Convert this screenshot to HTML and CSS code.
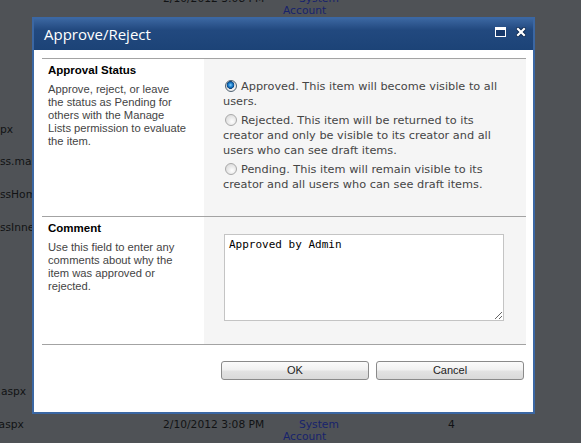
FILE: index.html
```html
<!DOCTYPE html>
<html>
<head>
<meta charset="utf-8">
<title>Approve/Reject</title>
<link rel="stylesheet" href="styles.css">
</head>
<body>
<div class="list">
  <div class="row"><span class="name"></span><span class="date">2/10/2012 3:08 PM</span><span class="user"><i class="presence"></i>System Account</span><span class="count"></span></div>
  <div class="row"><span class="name"></span><span class="date">2/10/2012 3:08 PM</span><span class="user"><i class="presence"></i>System Account</span><span class="count"></span></div>
  <div class="row"><span class="name"></span><span class="date">2/10/2012 3:08 PM</span><span class="user"><i class="presence"></i>System Account</span><span class="count"></span></div>
  <div class="row"><span class="name"></span><span class="date">2/10/2012 3:08 PM</span><span class="user"><i class="presence"></i>System Account</span><span class="count"></span></div>
  <div class="row"><span class="name">Page.aspx</span><span class="date">2/10/2012 3:08 PM</span><span class="user"><i class="presence"></i>System Account</span><span class="count"></span></div>
  <div class="row"><span class="name">BlueGlass.master</span><span class="date">2/10/2012 3:08 PM</span><span class="user"><i class="presence"></i>System Account</span><span class="count"></span></div>
  <div class="row"><span class="name">BlueGlassHome.aspx</span><span class="date">2/10/2012 3:08 PM</span><span class="user"><i class="presence"></i>System Account</span><span class="count"></span></div>
  <div class="row"><span class="name">BlueGlassInner.aspx</span><span class="date">2/10/2012 3:08 PM</span><span class="user"><i class="presence"></i>System Account</span><span class="count"></span></div>
  <div class="row"><span class="name"></span><span class="date">2/10/2012 3:08 PM</span><span class="user"><i class="presence"></i>System Account</span><span class="count"></span></div>
  <div class="row"><span class="name"></span><span class="date">2/10/2012 3:08 PM</span><span class="user"><i class="presence"></i>System Account</span><span class="count"></span></div>
  <div class="row"><span class="name"></span><span class="date">2/10/2012 3:08 PM</span><span class="user"><i class="presence"></i>System Account</span><span class="count"></span></div>
  <div class="row"><span class="name"></span><span class="date">2/10/2012 3:08 PM</span><span class="user"><i class="presence"></i>System Account</span><span class="count"></span></div>
  <div class="row"><span class="name">Default.aspx</span><span class="date">2/10/2012 3:08 PM</span><span class="user"><i class="presence"></i>System Account</span><span class="count"></span></div>
  <div class="row"><span class="name">Search.aspx</span><span class="date">2/10/2012 3:08 PM</span><span class="user"><i class="presence"></i>System Account</span><span class="count">4</span></div>
</div>

<div class="dialog">
  <div class="titlebar">
    <span class="title">Approve/Reject</span>
    <span class="tools">
      <svg class="icon-max" width="11" height="10" viewBox="0 0 11 10">
        <rect x="0.5" y="0.5" width="10" height="9" fill="#17386a" stroke="#ffffff" stroke-width="1"/>
        <rect x="1" y="1" width="9" height="2" fill="#ffffff"/>
      </svg>
      <svg class="icon-close" width="10" height="10" viewBox="0 0 10 10">
        <path d="M2 2 L8 8 M8 2 L2 8" stroke="#0e2a52" stroke-width="4" stroke-linecap="square"/>
        <path d="M2 2 L8 8 M8 2 L2 8" stroke="#ffffff" stroke-width="2.2" stroke-linecap="square"/>
      </svg>
    </span>
  </div>
  <div class="content">
    <div class="section">
      <div class="label">
        <h3>Approval Status</h3>
        <p>Approve, reject, or leave the status as Pending for others with the Manage Lists permission to evaluate the item.</p>
      </div>
      <div class="field options">
        <label class="option"><input class="radio" type="radio" name="status" checked>Approved. This item will become visible to all users.</label>
        <label class="option"><input class="radio" type="radio" name="status">Rejected. This item will be returned to its creator and only be visible to its creator and all users who can see draft items.</label>
        <label class="option"><input class="radio" type="radio" name="status">Pending. This item will remain visible to its creator and all users who can see draft items.</label>
      </div>
    </div>
    <div class="section">
      <div class="label">
        <h3>Comment</h3>
        <p>Use this field to enter any comments about why the item was approved or rejected.</p>
      </div>
      <div class="field comment">
        <textarea class="comment-box">Approved by Admin</textarea>
      </div>
    </div>
    <div class="buttons">
      <button class="btn" type="button">OK</button>
      <button class="btn" type="button">Cancel</button>
    </div>
  </div>
</div>
</body>
</html>
```

FILE: styles.css
```css
* { box-sizing: border-box; }

html, body {
  margin: 0;
  padding: 0;
  height: 100%;
  overflow: hidden;
}

body {
  background: #4f5256;
  font-family: "DejaVu Sans", Verdana, sans-serif;
}

/* background list (behind the modal overlay) */
.list {
  padding-top: 1px;
  margin: -8.5px 0 0 -41.5px;
  font-size: 10.7px;
  line-height: 12.5px;
  color: #111214;
}

.row {
  display: grid;
  grid-template-columns: 204.5px 120px 165px 40px;
  height: 32.8px;
  white-space: nowrap;
}

.user {
  white-space: normal;
  width: 70px;
  color: #17226c;
}

.presence {
  display: inline-block;
  width: 16px;
}

/* dialog */
.dialog {
  position: absolute;
  left: 32px;
  top: 17px;
  width: 503px;
  border: 2px solid #3b67a3;
  background: #ffffff;
  font-family: "Liberation Sans", Arial, sans-serif;
}

.titlebar {
  height: 31px;
  display: flex;
  justify-content: space-between;
  align-items: flex-start;
  padding: 0 7px 0 10px;
  background: linear-gradient(#3a659f 0, #22497f 35%, #1c4377 100%);
}

.title {
  font-family: "Open Sans", "Liberation Sans", sans-serif;
  font-size: 15px;
  line-height: 20px;
  color: #ffffff;
  padding-top: 5px;
}

.tools {
  display: flex;
  gap: 10px;
  margin-top: 8px;
}

.tools svg { display: block; }

.content {
  padding: 8px 7px 32px 8px;
}

.section {
  display: grid;
  grid-template-columns: 162px 1fr;
  border-top: 1px solid #a3a3a3;
}

.label {
  padding: 4px 17px 0 6px;
}

.label h3 {
  margin: 0;
  font-size: 11.5px;
  line-height: 14px;
  font-weight: bold;
  color: #000000;
}

.label p {
  margin: 6px 0 0;
  font-size: 11.2px;
  line-height: 13px;
  color: #444444;
}

.field {
  background: #f5f5f5;
}

.options {
  padding: 20px 14px 24px 19px;
}

.option {
  display: block;
  font-family: "DejaVu Sans", Verdana, sans-serif;
  font-size: 11.3px;
  line-height: 15px;
  color: #454545;
  margin-bottom: 4px;
}

.option:last-child { margin-bottom: 0; }

.radio {
  -webkit-appearance: none;
  appearance: none;
  display: inline-block;
  width: 12px;
  height: 12px;
  margin: 0 4px 0 2px;
  vertical-align: -2px;
  border-radius: 50%;
  border: 1px solid #a9a9a9;
  background: radial-gradient(circle at 60% 65%, #ffffff 0, #eeeeee 35%, #d4d4d4 100%);
}

.radio:checked {
  border-color: #4f6272;
  background:
    radial-gradient(circle at 45% 40%, #8fd3ff 0, #2c8fd8 1.6px, #0c5ea8 3px, #0b3f77 3.6px, rgba(0,0,0,0) 4.1px),
    radial-gradient(circle at 60% 65%, #ffffff 0, #e8e8e8 40%, #c9c9c9 100%);
}

.comment {
  padding: 17px 22px 23px 20px;
}

.comment-box {
  display: block;
  width: 280px;
  height: 87px;
  margin: 0;
  padding: 3px 4px;
  border: 1px solid #c4c4c4;
  background: #ffffff;
  font-family: "DejaVu Sans Mono", "Liberation Mono", monospace;
  font-size: 11px;
  line-height: 13px;
  color: #000000;
  resize: both;
}

.buttons {
  border-top: 1px solid #a3a3a3;
  padding: 16px 2px 0 0;
  display: flex;
  justify-content: flex-end;
  gap: 7px;
}

.btn {
  width: 148px;
  height: 19px;
  padding: 0;
  border: 1px solid #8a8a8a;
  border-radius: 3px;
  background: linear-gradient(#fbfbfb 0, #f1f1f1 45%, #e2e2e2 55%, #d9d9d9 100%);
  font-family: "Liberation Sans", Arial, sans-serif;
  font-size: 11px;
  line-height: 17px;
  color: #222222;
}
```
